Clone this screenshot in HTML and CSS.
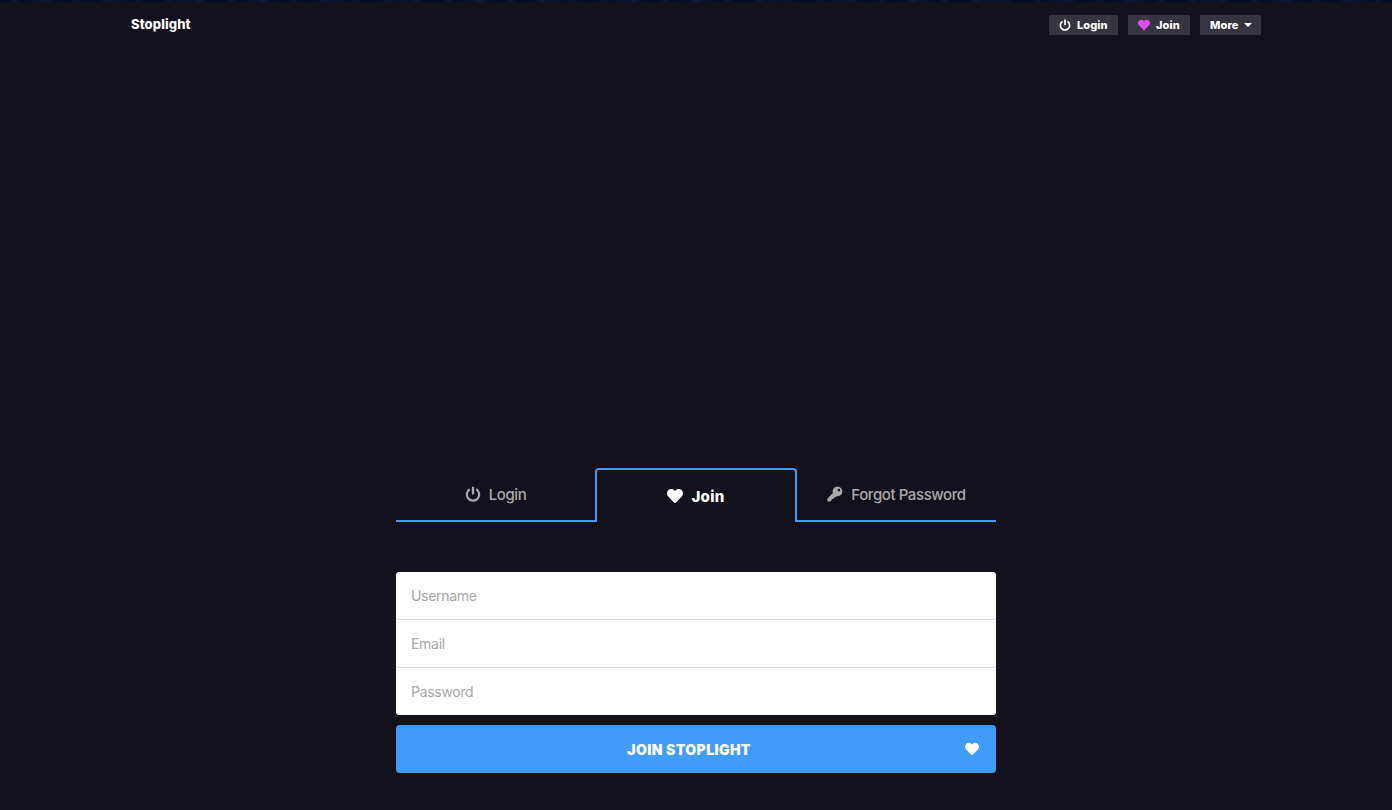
FILE: index.html
```html
<!DOCTYPE html>
<html lang="en">
<head>
<meta charset="utf-8">
<title>Join Stoplight</title>
<link rel="stylesheet" href="styles.css">
</head>
<body>
<svg class="sprite" aria-hidden="true">
  <symbol id="power" viewBox="0 0 16 16"><path d="M4.700 3.200A6.200 6.200 0 1 0 11.300 3.200M8 .8V8.400" fill="none" stroke="currentColor" stroke-width="2.200"/></symbol>
  <symbol id="heart" viewBox="0 0 512 512"><path fill="currentColor" d="M462.300 62.600C407.500 15.900 326 24.300 275.700 76.200L256 96.500l-19.700-20.300C186.100 24.300 104.500 15.900 49.700 62.600c-62.800 53.600-66.100 149.800-9.900 207.900l193.500 199.800c12.500 12.900 32.800 12.900 45.300 0l193.500-199.800c56.300-58.100 53-154.300-9.800-207.900z"/></symbol>
  <symbol id="key" viewBox="0 0 16 16"><path fill="currentColor" fill-rule="evenodd" d="M10.600.5a4.900 4.900 0 1 1-1.100 9.700L8.200 11.500H6.900L6.400 13H4.900L4.300 14.600 3.200 15.500H.9L.4 15V12.700L5.900 7A4.900 4.900 0 0 1 10.600.5zM11.900 2.800a1.300 1.300 0 1 0 0 2.600 1.300 1.300 0 0 0 0-2.600z"/></symbol>
</svg>
<div class="strip"></div>
<header class="header">
  <a class="brand">Stoplight</a>
  <nav class="nav">
    <a class="chip chip-login"><svg class="icon"><use href="#power"/></svg>Login</a>
    <a class="chip chip-join"><svg class="icon pink"><use href="#heart"/></svg>Join</a>
    <a class="chip chip-more">More<span class="caret"></span></a>
  </nav>
</header>
<main class="panel">
  <div class="tabs">
    <a class="tab"><svg class="icon"><use href="#power"/></svg>Login</a>
    <a class="tab active"><svg class="icon"><use href="#heart"/></svg>Join</a>
    <a class="tab"><svg class="icon"><use href="#key"/></svg>Forgot Password</a>
  </div>
  <form class="form">
    <div class="fields">
      <input class="field" type="text" placeholder="Username">
      <input class="field" type="email" placeholder="Email">
      <input class="field" type="password" placeholder="Password">
    </div>
    <button class="submit" type="button"><span class="label">JOIN STOPLIGHT</span><svg class="icon"><use href="#heart"/></svg></button>
  </form>
</main>
</body>
</html>
```
FILE: styles.css
```css
* { box-sizing: border-box; }
body {
  margin: 0;
  height: 810px;
  overflow: hidden;
  background: #13111b;
  font-family: Inter, "Liberation Sans", sans-serif;
  color: #fff;
}
.sprite { display: none; }
.strip {
  height: 2px;
  background:
    repeating-linear-gradient(90deg, transparent 0 9px, rgba(22, 36, 88, .35) 12px 17px, transparent 20px 31px),
    repeating-linear-gradient(90deg, #060b26 0 20px, #0a1232 34px 48px, #060b26 60px 73px);
}
.header {
  width: 1130px;
  height: 46px;
  margin: 0 auto;
  display: flex;
  align-items: center;
  justify-content: space-between;
}
.brand { font-size: 13px; font-weight: 800; letter-spacing: .1px; padding-bottom: 2px; }
.nav { display: flex; gap: 10px; }
.chip {
  height: 20px;
  display: flex;
  align-items: center;
  background: #36343f;
  border-radius: 1px;
  font-size: 11px;
  font-weight: 800;
  letter-spacing: .1px;
  padding-left: 10px;
}
.chip .icon { width: 12px; height: 12px; margin-right: 6px; }
.chip-login { width: 69px; }
.chip-join { width: 62px; }
.chip-more { width: 61px; }
.pink { color: #dc4ef5; }
.caret {
  margin-left: 5px;
  border: 4px solid transparent;
  border-top-color: #fff;
  border-bottom: 0;
}
.panel { width: 600px; margin: 420px auto 0; }
.tabs { display: flex; height: 54px; }
.tab {
  flex: 1;
  display: flex;
  align-items: center;
  justify-content: center;
  gap: 8px;
  border-bottom: 2px solid #419bf9;
  color: #aaa;
  font-size: 15px;
  font-weight: 500;
  letter-spacing: -.42px;
}
.tab .icon { width: 16px; height: 16px; }
.tab.active {
  flex: 0 0 202px;
  border: 2px solid #419bf9;
  border-bottom: 0;
  border-radius: 4px 4px 0 0;
  color: #fff;
  font-weight: 800;
  letter-spacing: .3px;
}
.form { margin-top: 50px; }
.fields {
  height: 143px;
  display: flex;
  flex-direction: column;
  overflow: hidden;
  border-radius: 4px;
  background: #fff;
}
.field {
  height: 48px;
  padding: 0 15px;
  border: 0;
  border-bottom: 1px solid #ddd;
  background: #fff;
  font: 14px Inter, "Liberation Sans", sans-serif;
  letter-spacing: -.3px;
}
.field:last-child { height: 47px; border-bottom: 0; }
.field::placeholder { color: #a6a6a6; opacity: 1; }
.submit {
  width: 600px;
  height: 48px;
  margin-top: 10px;
  padding: 0 17px 0 0;
  display: flex;
  align-items: center;
  border: 0;
  border-radius: 4px;
  background: #419bf9;
  color: #fff;
  font: 900 14px Inter, "Liberation Sans", sans-serif;
  letter-spacing: .4px;
}
.label { flex: 1; padding: 0 0 0 17px; }
.submit .icon { width: 14px; height: 14px; }
```
